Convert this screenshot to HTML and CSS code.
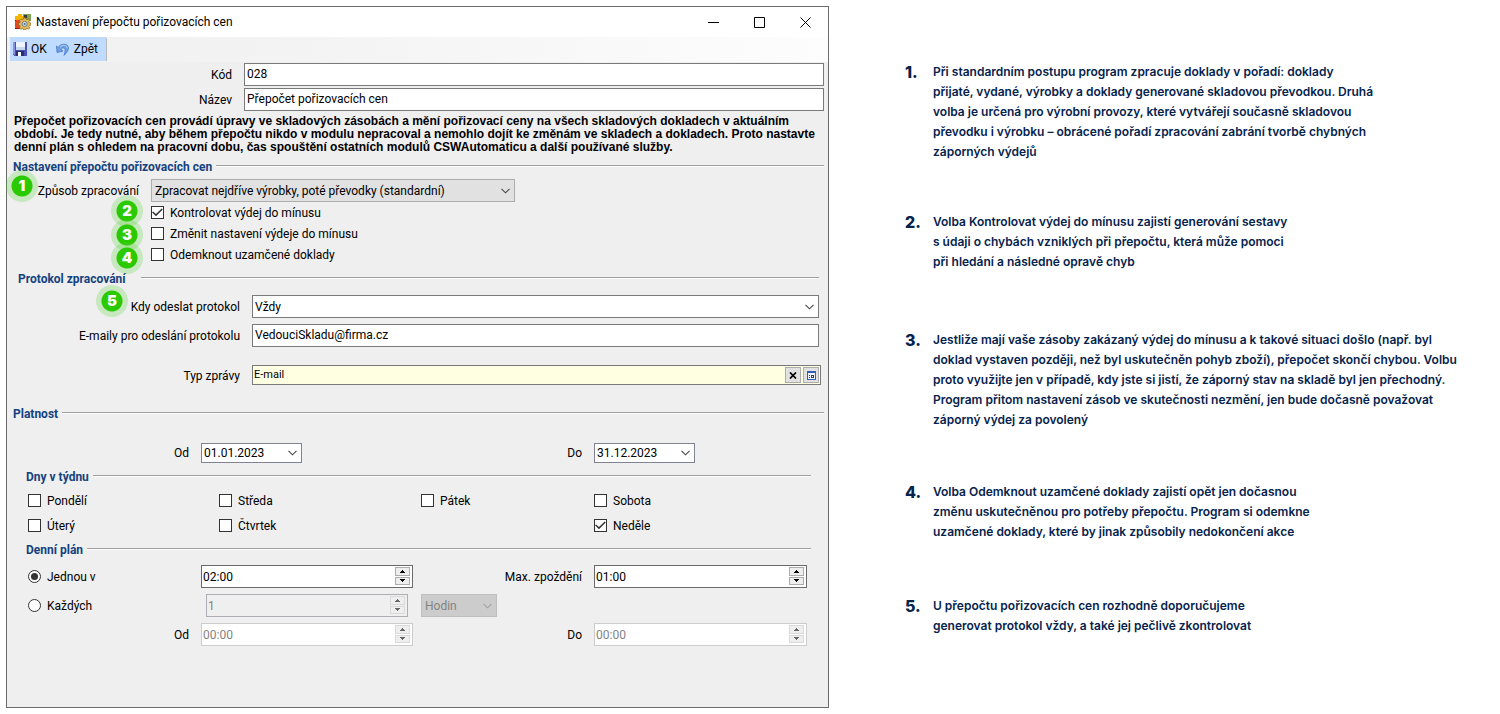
FILE: index.html
```html
<!DOCTYPE html>
<html lang="cs">
<head>
<meta charset="utf-8">
<title>Nastavení přepočtu pořizovacích cen</title>
<link rel="stylesheet" href="styles.css">
</head>
<body>
<svg class="defs" aria-hidden="true">
  <symbol id="chevron" viewBox="0 0 9 6"><path d="M.5 .8 4.500 4.800 8.500 .8" fill="none" stroke="currentColor" stroke-width="1.1"/></symbol>
  <symbol id="up" viewBox="0 0 5 3"><path d="M2 0h1v1h1v1h1v1H0V2h1V1h1z" fill="currentColor"/></symbol>
  <symbol id="down" viewBox="0 0 5 3"><path d="M0 0h5v1H4v1H3v1H2V2H1V1H0z" fill="currentColor"/></symbol>
</svg>
<div class="page">
  <main class="window">
    <header class="titlebar">
      <svg class="icon" viewBox="0 0 16 16" aria-hidden="true">
        <path d="M0 2h3V0h4v2h1v5H0z" fill="#f7b500"/>
        <path d="M8 0h8v7H8z" fill="#7fa650"/>
        <path d="M9 1h3v3H9z" fill="#39393b"/>
        <path d="M0 6h5v9H0z" fill="#e8471c"/>
        <path d="M0 6h1v1H0zm0 8h6v1H0z" fill="#8c1f12"/>
        <path d="M8.600 3.800h2l.3 1.500 1.200.5 1.300-.9 1.400 1.400-.9 1.300.5 1.200 1.600.3v2l-1.600.3-.5 1.200.9 1.300-1.400 1.400-1.300-.9-1.200.5-.3 1.100h-2l-.3-1.100-1.200-.5-1.300.9-1.400-1.400.9-1.300-.5-1.200-1.400-.3v-2l1.400-.3.5-1.200-.9-1.300 1.400-1.400 1.300.9 1.200-.5z" fill="#e3bd61" stroke="#86601d" stroke-width=".7"/>
        <circle cx="9.600" cy="10" r="2.600" fill="#cfe0ee" stroke="#65635c" stroke-width=".8"/>
        <circle cx="9.600" cy="10" r="1" fill="#3f6b9c"/>
      </svg>
      <h1 class="title">Nastavení přepočtu pořizovacích cen</h1>
      <div class="window-buttons">
        <button type="button" class="window-button" aria-label="Minimalizovat"><svg viewBox="0 0 11 11"><path d="M0 5.500h11"/></svg></button>
        <button type="button" class="window-button" aria-label="Maximalizovat"><svg viewBox="0 0 11 11"><path d="M.5 .5h10v10H.5z"/></svg></button>
        <button type="button" class="window-button" aria-label="Zavřít"><svg viewBox="0 0 11 11"><path d="M.5 .5l10 10M10.500 .5l-10 10"/></svg></button>
      </div>
    </header>

    <div class="toolbar">
      <div class="tool-group">
        <button type="button" class="tool tool-save">
          <svg viewBox="0 0 14 14" aria-hidden="true">
            <path d="M0 0h14v14H1.500L0 12.500z" fill="#4a50b0"/>
            <path d="M0 0h2v13L0 12z" fill="#8b92dc"/>
            <path d="M3 0h9v8H3z" fill="#eef4fd"/><path d="M3 5h9v3H3z" fill="#c4d6f2"/>
            <path d="M3 9h8v5H3z" fill="#2b2f6d"/><path d="M5 10h3v4H5z" fill="#fff"/>
          </svg>OK</button>
        <button type="button" class="tool">
          <svg viewBox="0 0 14 14" aria-hidden="true">
            <path d="M2.200 5.500C5 .6 13.300 1.200 12.300 7c-.4 2.600-2.500 4.500-4.300 6.400 1-3.300 2.500-8.200-1.500-7.400-.8.200-1.200.7-1.500 1.500l2 1.600-6 1.400L.5 3.800z" fill="#6fa0e4" stroke="#4779c4" stroke-width=".8"/>
            <path d="M4 5.200c2.600-3 7-2.300 7.200 1" fill="none" stroke="#b7d3f7"/>
          </svg>Zpět</button>
      </div>
    </div>

    <form class="form">
      <div class="row row-head"><label for="kod">Kód</label><input class="box" id="kod" type="text" value="028"></div>
      <div class="row row-head"><label for="nazev">Název</label><input class="box" id="nazev" type="text" value="Přepočet pořizovacích cen"></div>

      <p class="warning">Přepočet pořizovacích cen provádí úpravy ve skladových zásobách a mění pořizovací ceny na všech skladových dokladech v aktuálním<br>období. Je tedy nutné, aby během přepočtu nikdo v modulu nepracoval a nemohlo dojít ke změnám ve skladech a dokladech. Proto nastavte<br>denní plán s ohledem na pracovní dobu, čas spouštění ostatních modulů CSWAutomaticu a další používané služby.</p>

      <section class="processing">
        <h2 class="heading">Nastavení přepočtu pořizovacích cen</h2>
        <div class="row row-method">
          <span class="badge badge-far">1</span>
          <label for="zpusob">Způsob zpracování</label>
          <span class="select select-grey"><select id="zpusob"><option>Zpracovat nejdříve výrobky, poté převodky (standardní)</option></select><svg><use href="#chevron"/></svg></span>
        </div>
        <div class="row row-check"><span class="badge badge-2">2</span><label class="check"><input type="checkbox" checked>Kontrolovat výdej do mínusu</label></div>
        <div class="row row-check"><span class="badge badge-3">3</span><label class="check"><input type="checkbox">Změnit nastavení výdeje do mínusu</label></div>
        <div class="row row-check"><span class="badge badge-4">4</span><label class="check"><input type="checkbox">Odemknout uzamčené doklady</label></div>
      </section>

      <section class="protocol">
        <h2 class="heading">Protokol zpracování</h2>
        <div class="row row-protocol">
          <span class="badge badge-5">5</span>
          <label for="kdy">Kdy odeslat protokol</label>
          <span class="select"><select id="kdy"><option>Vždy</option></select><svg><use href="#chevron"/></svg></span>
        </div>
        <div class="row row-protocol"><label for="emaily">E-maily pro odeslání protokolu</label><input class="box" id="emaily" type="text" value="VedouciSkladu@firma.cz"></div>
        <div class="row row-protocol row-type">
          <label for="typ">Typ zprávy</label>
          <span class="lookup">
            <input id="typ" type="text" value="E-mail">
            <button type="button" aria-label="Vymazat"><svg viewBox="0 0 8 7"><path d="M1 .5l6 6M7 .5l-6 6" stroke="#000" stroke-width="1.700"/></svg></button>
            <button type="button" aria-label="Vybrat"><svg class="list-icon" viewBox="0 0 9 9"><path d="M0 0h9v9H0z" fill="#2f62b5"/><path d="M1 2h7v6H1z" fill="#eef3fb"/><path d="M2 4h1v1H2zm0 2h1v1H2zM4 4h3v3H4z" fill="#333c55"/><path d="M5 5h1v1H5z" fill="#fff"/></svg></button>
          </span>
        </div>
      </section>

      <section class="validity">
        <h2 class="heading">Platnost</h2>
        <div class="grid grid-dates">
          <div class="cell-label"><label for="od-datum">Od</label></div>
          <span class="date"><input id="od-datum" type="text" value="01.01.2023"><button type="button" aria-label="Kalendář"><svg><use href="#chevron"/></svg></button></span>
          <div class="cell-label"><label for="do-datum">Do</label></div>
          <span class="date"><input id="do-datum" type="text" value="31.12.2023"><button type="button" aria-label="Kalendář"><svg><use href="#chevron"/></svg></button></span>
        </div>
      </section>

      <section class="plan">
        <h2 class="heading">Dny v týdnu</h2>
        <div class="days">
          <label class="check"><input type="checkbox">Pondělí</label>
          <label class="check"><input type="checkbox">Středa</label>
          <label class="check"><input type="checkbox">Pátek</label>
          <label class="check"><input type="checkbox">Sobota</label>
          <label class="check"><input type="checkbox">Úterý</label>
          <label class="check"><input type="checkbox">Čtvrtek</label>
          <label class="check day-last"><input type="checkbox" checked>Neděle</label>
        </div>
      </section>

      <section class="plan">
        <h2 class="heading">Denní plán</h2>
        <div class="grid grid-plan">
          <label class="check"><input type="radio" name="plan" checked>Jednou v</label>
          <span class="spin"><input type="text" aria-label="Jednou v" value="02:00"><span class="arrows"><button type="button" aria-label="Více"><svg><use href="#up"/></svg></button><button type="button" aria-label="Méně"><svg><use href="#down"/></svg></button></span></span>
          <div class="cell-label"><label for="zpozdeni">Max. zpoždění</label></div>
          <span class="spin"><input id="zpozdeni" type="text" value="01:00"><span class="arrows"><button type="button" aria-label="Více"><svg><use href="#up"/></svg></button><button type="button" aria-label="Méně"><svg><use href="#down"/></svg></button></span></span>

          <label class="check"><input type="radio" name="plan">Každých</label>
          <span class="spin spin-off spin-inset"><input type="text" aria-label="Každých" value="1" disabled><span class="arrows"><button type="button" aria-label="Více" disabled><svg><use href="#up"/></svg></button><button type="button" aria-label="Méně" disabled><svg><use href="#down"/></svg></button></span></span>
          <span class="select select-off"><select aria-label="Jednotka" disabled><option>Hodin</option></select><svg><use href="#chevron"/></svg></span>
          <span></span>

          <div class="cell-label"><label for="od-cas">Od</label></div>
          <span class="spin spin-off"><input id="od-cas" type="text" value="00:00" disabled><span class="arrows"><button type="button" aria-label="Více" disabled><svg><use href="#up"/></svg></button><button type="button" aria-label="Méně" disabled><svg><use href="#down"/></svg></button></span></span>
          <div class="cell-label"><label for="do-cas">Do</label></div>
          <span class="spin spin-off"><input id="do-cas" type="text" value="00:00" disabled><span class="arrows"><button type="button" aria-label="Více" disabled><svg><use href="#up"/></svg></button><button type="button" aria-label="Méně" disabled><svg><use href="#down"/></svg></button></span></span>
        </div>
      </section>
    </form>
  </main>

  <ol class="notes">
    <li class="note"><span class="note-number">1.</span><p>Při standardním postupu program zpracuje doklady v pořadí: doklady<br>přijaté, vydané, výrobky a doklady generované skladovou převodkou. Druhá<br>volba je určená pro výrobní provozy, které vytvářejí současně skladovou<br>převodku i výrobku – obrácené pořadí zpracování zabrání tvorbě chybných<br>záporných výdejů</p></li>
    <li class="note"><span class="note-number">2.</span><p>Volba Kontrolovat výdej do mínusu zajistí generování sestavy<br>s údaji o chybách vzniklých při přepočtu, která může pomoci<br>při hledání a následné opravě chyb</p></li>
    <li class="note"><span class="note-number">3.</span><p>Jestliže mají vaše zásoby zakázaný výdej do mínusu a k takové situaci došlo (např. byl<br>doklad vystaven později, než byl uskutečněn pohyb zboží), přepočet skončí chybou. Volbu<br>proto využijte jen v případě, kdy jste si jistí, že záporný stav na skladě byl jen přechodný.<br>Program přitom nastavení zásob ve skutečnosti nezmění, jen bude dočasně považovat<br>záporný výdej za povolený</p></li>
    <li class="note"><span class="note-number">4.</span><p>Volba Odemknout uzamčené doklady zajistí opět jen dočasnou<br>změnu uskutečněnou pro potřeby přepočtu. Program si odemkne<br>uzamčené doklady, které by jinak způsobily nedokončení akce</p></li>
    <li class="note"><span class="note-number">5.</span><p>U přepočtu pořizovacích cen rozhodně doporučujeme<br>generovat protokol vždy, a také jej pečlivě zkontrolovat</p></li>
  </ol>
</div>
</body>
</html>
```
FILE: styles.css
```css
* { box-sizing: border-box; }
body {
  margin: 0;
  background: #fff;
  color: #000;
  font: 12px/16px Roboto, "Open Sans", sans-serif;
}
h1, h2, p, ol { margin: 0; padding: 0; }
input, select, button { font: inherit; color: inherit; margin: 0; }
button { padding: 0; border: 0; background: none; }
label { white-space: nowrap; }
.defs { position: absolute; width: 0; height: 0; }

.page {
  display: grid;
  grid-template-columns: minmax(0, 823fr) minmax(0, 671fr);
  min-height: 100vh;
  padding: 6px 0 6px 6px;
}
.window {
  border: 1px solid #6b6b6b;
  background: #efefef;
}

.titlebar {
  display: flex;
  align-items: center;
  height: 30px;
  padding-left: 8px;
  background: #fff;
}
.icon { width: 16px; height: 16px; margin-right: 5px; }
.title { flex: 1; font-size: 12px; font-weight: 400; }
.window-buttons { display: flex; }
.window-button {
  display: flex;
  align-items: center;
  justify-content: center;
  width: 46px;
  height: 29px;
}
.window-button svg { width: 11px; height: 11px; fill: none; stroke: #000; stroke-width: 1; }

.toolbar {
  height: 25px;
  padding-left: 3px;
  background: linear-gradient(90deg, #f1f1f1, #f3f3f3 35%, #fdfdfd);
}
.tool-group {
  display: inline-flex;
  gap: 9px;
  height: 24px;
  padding: 0 8px 0 3px;
  border-right: 1px solid #b9b9b9;
  border-radius: 0 3px 0 0;
  background: #bfdbff;
}
.tool { display: flex; align-items: center; gap: 4px; }
.tool svg { width: 14px; height: 14px; }

.form { padding: 1px 4px 12px 0; }
.row {
  position: relative;
  display: grid;
  align-items: center;
  column-gap: 12px;
}
.row > label:not(.check) { text-align: right; padding-top: 1px; }
.row-head { grid-template-columns: 225px minmax(0, 1fr); margin-bottom: 2px; }

.box {
  width: 100%;
  height: 23px;
  padding: 0 2px 2px;
  border: 1px solid #7a7a7a;
  background: #fff;
}

.warning {
  margin: 4px 0 5px;
  padding-left: 7px;
  font: bold 12px/13px "Liberation Sans", Arial, sans-serif;
  white-space: nowrap;
}

.heading {
  display: flex;
  align-items: center;
  gap: 4px;
  padding-left: 6px;
  color: #14427f;
  font-size: 12px;
  line-height: 16px;
  font-weight: 700;
  white-space: nowrap;
}
.heading::after {
  content: "";
  flex: 1;
  margin-bottom: 2px;
  border-top: 1px solid #a0a0a0;
  border-bottom: 1px solid #fff;
}

.row-method { grid-template-columns: 132px 364px; margin-top: 4px; }
.row-check { height: 21px; padding-left: 144px; }

.check { display: flex; align-items: center; gap: 6px; }
.check input {
  flex: none;
  appearance: none;
  display: grid;
  place-items: center;
  width: 13px;
  height: 13px;
  border: 1px solid #333;
  background: #fff;
}
.check input[type="checkbox"]:checked::after {
  content: "";
  width: 11px;
  height: 9px;
  background: #333;
  clip-path: polygon(0 48%, 10% 38%, 36% 68%, 88% 6%, 98% 16%, 36% 92%);
}
.check input[type="radio"] { border-radius: 50%; }
.check input[type="radio"]:checked::after {
  content: "";
  width: 7px;
  height: 7px;
  border-radius: 50%;
  background: #333;
}

.select { position: relative; display: block; height: 23px; }
.select select {
  appearance: none;
  display: block;
  width: 100%;
  height: 23px;
  padding: 0 20px 0 2px;
  border: 1px solid #7a7a7a;
  border-radius: 0;
  background: #fff;
}
.select svg {
  position: absolute;
  top: 9px;
  right: 5px;
  width: 9px;
  height: 6px;
  color: #444;
  pointer-events: none;
}
.select-grey select { padding-left: 3px; border-color: #adadad; background: #e1e1e1; }
.select-off { width: 76px; }
.select-off select { padding-left: 3px; border-color: #bfbfbf; background: #ccc; color: #838383; opacity: 1; }
.select-off svg { color: #a3a3a3; }

.badge {
  position: absolute;
  display: grid;
  place-items: center;
  width: 32px;
  height: 32px;
  border-radius: 50%;
  background: radial-gradient(circle, #2bc900 10px, rgba(80, 210, 50, .25) 11px);
  color: #fff;
  font: 900 15px/20px Inter, sans-serif;
}
.badge-far { left: -1px; top: -9px; }
.badge-2 { left: 104px; top: -7px; }
.badge-3 { left: 104px; top: -4px; }
.badge-4 { left: 104px; top: -2px; }
.badge-5 { left: 89px; top: -10px; }

.protocol { margin-top: 6px; padding-right: 5px; }
.protocol .heading { gap: 15px; padding-left: 11px; }
.row-protocol { grid-template-columns: 233px minmax(0, 1fr); margin-top: 6px; }
.heading + .row-protocol { margin-top: 8px; }
.row-type { margin: 18px -2px 0 0; }
.lookup {
  display: flex;
  align-items: center;
  gap: 2px;
  height: 20px;
  padding: 0 1px;
  border: 1px solid #7a7a7a;
  background: #ffffe1;
}
.lookup input {
  flex: 1;
  min-width: 0;
  padding: 0;
  border: 0;
  background: none;
  font-size: 11px;
}
.lookup button {
  display: flex;
  align-items: center;
  justify-content: center;
  width: 16px;
  height: 16px;
  border: 1px solid #adadad;
  background: #e1e1e1;
}
.lookup svg { width: 8px; height: 7px; }
.lookup .list-icon { width: 9px; height: 9px; }

.validity { margin-top: 21px; }
.grid {
  display: grid;
  grid-template-columns: 173px minmax(0, 220fr) 173px minmax(0, 217fr);
  align-items: center;
  margin: 21px 13px 0 21px;
}
.cell-label { padding-right: 12px; text-align: right; }
.date {
  display: flex;
  width: 101px;
  height: 20px;
  border: 1px solid #7f8394;
  background: #fff;
}
.date input {
  flex: 1;
  min-width: 0;
  padding: 0 2px;
  border: 0;
  background: none;
}
.date button { display: grid; place-items: center; width: 17px; }
.date svg { width: 9px; height: 6px; color: #444; }

.plan { margin-top: 6px; }
.plan + .plan { margin-top: 4px; }
.plan .heading { padding: 0 13px 0 19px; }
.days {
  display: grid;
  grid-template-columns: 191fr 202fr 173fr 217fr;
  grid-auto-rows: 25px;
  margin: 3px 13px 0 21px;
}
.day-last { grid-column: 4; }

.grid-plan { grid-auto-rows: 29px; margin-top: 4px; }
.spin {
  display: flex;
  height: 23px;
  margin-right: 8px;
  padding: 0 2px 0 0;
  border: 1px solid #6a6a6a;
  background: #fff;
}
.spin:nth-child(4n) { margin-right: 4px; }
.spin input {
  flex: 1;
  min-width: 0;
  padding: 0 1px;
  border: 0;
  background: none;
}
.arrows { display: grid; gap: 1px; width: 15px; padding: 1px 0 2px; }
.arrows button {
  display: grid;
  place-items: center;
  border: 1px solid #adadad;
  background: #eee;
}
.arrows svg { width: 5px; height: 3px; }
.spin-off { border-color: #ccc; color: #838383; }
.spin-off button { border-color: #d9d9d9; color: #666; }
.spin-inset { margin: 0 13px 0 5px; border-color: #adadb3; background: #efefef; }

.notes {
  display: flex;
  flex-direction: column;
  gap: 50px;
  padding: 56px 0 0 76px;
  list-style: none;
  color: #06234d;
  font: 600 12px/20px Inter, sans-serif;
}
.note { display: grid; grid-template-columns: 28px minmax(0, 1fr); white-space: nowrap; }
.note:nth-child(2) { padding-bottom: 8px; }
.note:nth-child(3) { padding-bottom: 2px; }
.note:nth-child(4) { padding-bottom: 4px; }
.note-number { font-size: 16px; font-weight: 800; }
```
